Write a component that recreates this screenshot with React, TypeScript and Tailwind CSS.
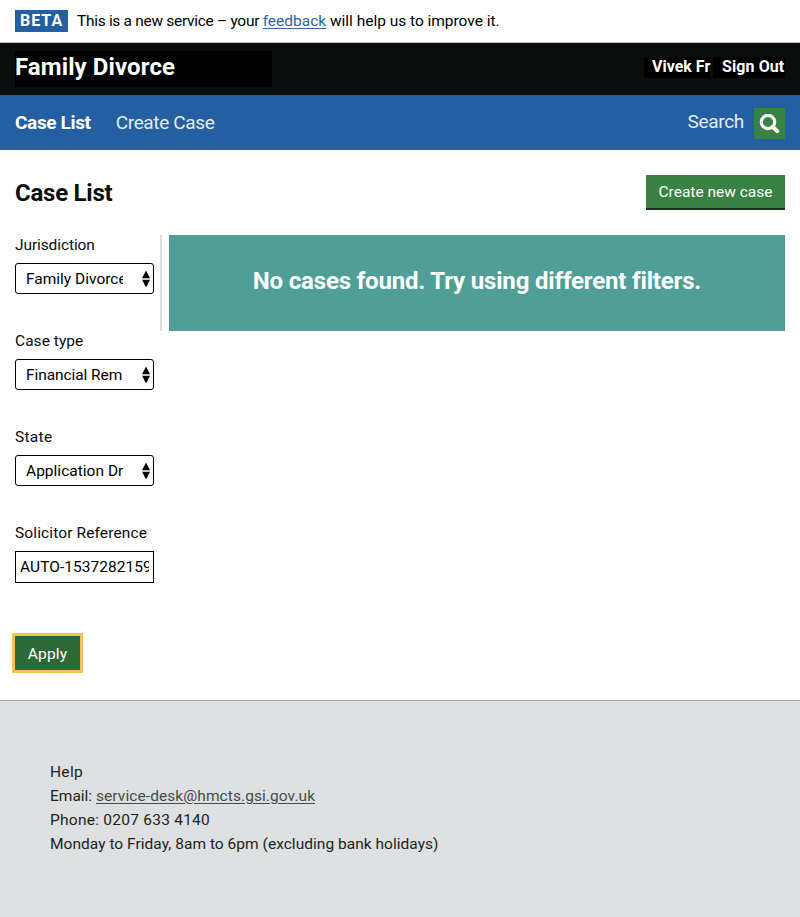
function SortArrows() {
  return (
    <svg width="8" height="18" viewBox="0 0 8 18" className="shrink-0" aria-hidden="true">
      <path d="M4 0.5 L8 8.2 H0 Z M0 9.8 H8 L4 17.5 Z" fill="#000" />
    </svg>
  )
}

type SelectFieldProps = { label: string; value: string; labelClass: string; valueClass: string }

function SelectField({ label, value, labelClass, valueClass }: SelectFieldProps) {
  return (
    <div className="h-24">
      <div className={`h-7 leading-5 ${labelClass}`}>{label}</div>
      <button
        type="button"
        className="flex h-[31px] w-[139px] items-center justify-between rounded-[3px] border border-black bg-white pr-[3px] pl-2.5 text-black"
      >
        <span className={`w-[97px] overflow-hidden text-left leading-6 whitespace-nowrap ${valueClass}`}>{value}</span>
        <SortArrows />
      </button>
    </div>
  )
}

function BetaBanner() {
  return (
    <div className="flex h-[43px] items-start border-b border-[#bfc1c3] px-[15px] pt-2.5 text-black">
      <strong className="h-[22px] w-[53px] bg-[#235fa1] pl-[5px] text-base leading-[21px] font-bold tracking-[1px] text-white">
        BETA
      </strong>
      <p className="ml-[9px] leading-[22px] whitespace-pre">
        <span className="tracking-[-0.3px]">This is a new service – your </span>
        <a className="text-[#2b66a7] underline underline-offset-2">feedback</a>
        <span className="tracking-[-0.02px]"> will help us to improve it.</span>
      </p>
    </div>
  )
}

function Header() {
  return (
    <header className="flex h-[52px] items-start justify-between bg-[#0b0d0c] px-[15px] font-bold text-white">
      <div className="mt-2 h-9 w-[257px] bg-black text-2xl leading-[33px] tracking-[0.1px]">Family Divorce</div>
      <div className="mt-3.5 flex gap-[3px] text-base leading-5 whitespace-nowrap">
        <span className="h-[21px] w-[66px] bg-black pl-2">Vivek Fr</span>
        <span className="h-[21px] w-[72px] bg-black pl-[9px] tracking-[0.1px]">Sign Out</span>
      </div>
    </header>
  )
}

function Nav() {
  return (
    <nav className="flex h-[55px] items-center justify-between bg-[#235fa1] px-[15px] text-[19px] tracking-[-0.35px] text-white">
      <div className="flex gap-[25px] pt-0.5">
        <span className="font-bold">Case List</span>
        <span className="text-[#e3ebf3]">Create Case</span>
      </div>
      <div className="flex items-center gap-2.5">
        <span className="tracking-[-0.3px] text-[#e3ebf3]">Search</span>
        <span className="mt-[2px] flex h-[31px] w-[31px] items-center justify-center bg-[#388243]">
          <svg width="21" height="21" viewBox="0 0 21 21" fill="none" stroke="#fff" aria-hidden="true">
            <circle cx="9" cy="9" r="6.7" strokeWidth="3.2" />
            <path d="M14 14 L18.2 18.2" strokeWidth="4" strokeLinecap="round" />
          </svg>
        </span>
      </div>
    </nav>
  )
}

function Footer() {
  return (
    <footer className="h-[217px] border-t border-[#a1acb2] bg-[#dee0e2] pt-[59px] pl-[50px] leading-6 text-[#1d1f20]">
      <p className="tracking-[0.3px]">Help</p>
      <p>
        Email: <a className="tracking-[0.08px] text-[#454a4d] underline underline-offset-2">service-desk@hmcts.gsi.gov.uk</a>
      </p>
      <p className="tracking-[0.25px]">Phone: 0207 633 4140</p>
      <p className="tracking-[0.03px]">Monday to Friday, 8am to 6pm (excluding bank holidays)</p>
    </footer>
  )
}

export default function App() {
  return (
    <div className="flex h-[917px] w-[800px] flex-col overflow-hidden bg-white font-[Roboto,'Noto_Sans',sans-serif] text-[15.5px] text-[#0b0c0c]">
      <BetaBanner />
      <Header />
      <Nav />
      <main className="h-[550px] px-[15px] pt-[25px]">
        <div className="flex h-[60px] items-start justify-between">
          <h1 className="text-2xl leading-9 font-bold tracking-[-0.25px]">Case List</h1>
          <button
            type="button"
            className="h-[35px] w-[139px] border-b-2 border-[#18331d] bg-[#388243] pt-[3px] whitespace-nowrap text-white"
          >
            Create new case
          </button>
        </div>
        <div className="flex items-start">
          <form className="w-[145px]">
            <SelectField label="Jurisdiction" value="Family Divorce" labelClass="tracking-[-0.1px]" valueClass="tracking-[0px]" />
            <SelectField label="Case type" value="Financial Rem" labelClass="tracking-[0.05px]" valueClass="tracking-[-0.08px]" />
            <SelectField label="State" value="Application Dr" labelClass="tracking-[0.3px]" valueClass="tracking-[0.02px]" />
            <div className="h-[101px]">
              <div className="h-7 leading-5 tracking-[0.12px]">Solicitor Reference</div>
              <div className="h-8 w-[139px] border border-black px-1">
                <div className="overflow-hidden leading-[30px] tracking-[0.05px] whitespace-nowrap text-black">
                  AUTO-1537282159
                </div>
              </div>
            </div>
            <button
              type="button"
              className="mt-3 h-[34px] w-[65px] bg-[#2d6936] pt-[3px] tracking-[0.2px] text-white outline-3 outline-[#fbbf57]"
            >
              Apply
            </button>
          </form>
          <section className="flex h-24 flex-1 border-l-2 border-[#dee0e1] pl-[7px]">
            <h2 className="flex-1 bg-[#4f9f96] pt-7 text-center text-2xl leading-9 font-bold tracking-[-0.17px] text-white">
              No cases found. Try using different filters.
            </h2>
          </section>
        </div>
      </main>
      <Footer />
    </div>
  )
}
